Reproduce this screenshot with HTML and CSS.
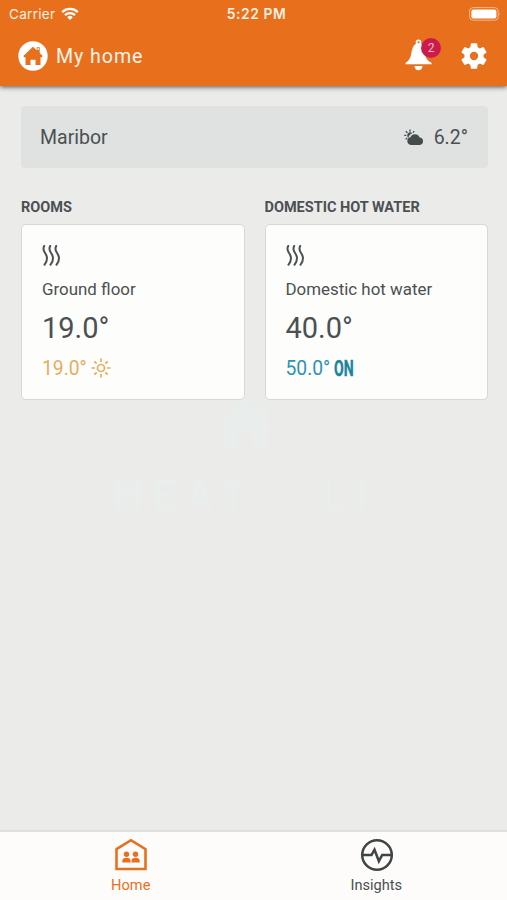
FILE: index.html
```html
<!DOCTYPE html>
<html lang="en">
<head>
<meta charset="utf-8">
<title>My home</title>
<link rel="stylesheet" href="styles.css">
</head>
<body>
<div class="app">
  <header class="header">
    <div class="status">
      <div class="carrier"><span>Carrier</span>
        <svg width="18" height="14" viewBox="0 0 18 14" fill="none" stroke="#fff" stroke-width="2.3"><path d="M1.2 5.1a11.2 11.2 0 0 1 15.6 0M4 8.1a7.2 7.2 0 0 1 10 0"/><path d="M9 13 6.2 10.2a4 4 0 0 1 5.6 0z" fill="#fff" stroke="none"/></svg>
      </div>
      <div class="time">5:22 PM</div>
      <svg class="battery" width="32" height="14" viewBox="0 0 32 14"><rect x=".6" y=".6" width="28.6" height="12.6" rx="3.6" fill="none" stroke="#f6b98c"/><rect x="2.4" y="2.4" width="25" height="9" rx="2" fill="#fff"/><path d="M30.5 5v4q1.3-2 0-4" fill="#f6b98c"/></svg>
    </div>
    <div class="toolbar">
      <svg width="30" height="30" viewBox="0 0 30 30"><circle cx="15" cy="15" r="14.7" fill="#fff"/><path fill="#e8701c" d="M15 5.800 18.700 9.300V6.300h3V12l3 3-1.200 1.600-1-.4V24H17.500v-5.300h-5V24H7.500v-7.800l-1 .4-1.200-1.600z"/><circle cx="20.200" cy="7.900" r=".9" fill="#fff"/></svg>
      <h1 class="title">My home</h1>
      <div class="bell">
        <svg width="28" height="32" viewBox="0 0 28 32"><path fill="#fff" d="M13.500.5c1.800 0 2.800 1.100 2.800 2.600 0 .7-.2 1.200-.2 1.700 2.600 1.900 3.300 5.500 3.800 9.200.6 4.600 2.300 7.900 6.700 9.700v1.600H.6v-1.600c3.300-1.700 5-4.800 5.700-9.200.7-4.200 1.500-7.700 4.600-9.700 0-.5-.2-1-.2-1.700 0-1.500 1-2.600 2.800-2.600z"/><path fill="#fff" d="M9.500 27h8c-.2 2.800-1.700 4.200-4 4.200S9.700 29.800 9.500 27z"/><circle cx="13.500" cy="3.300" r="1.100" fill="#e8701c"/></svg>
        <span class="badge">2</span>
      </div>
      <svg class="gear" width="32" height="32" viewBox="0 0 24 24" fill="#fff"><path d="M19.14 12.94c.04-.3.06-.61.06-.94 0-.32-.02-.64-.07-.94l2.03-1.58a.49.49 0 0 0 .12-.61l-1.92-3.32a.488.488 0 0 0-.59-.22l-2.39.96c-.5-.38-1.030-.7-1.620-.94l-.36-2.540a.484.484 0 0 0-.480-.410h-3.840c-.240 0-.430.170-.470.410l-.360 2.540c-.590.240-1.130.570-1.620.940l-2.390-.960c-.220-.080-.470 0-.590.220L2.740 8.870c-.120.210-.080.470.120.610l2.030 1.580c-.050.300-.090.630-.090.940s.020.640.070.940l-2.030 1.580a.49.49 0 0 0-.12.61l1.920 3.320c.12.22.37.29.59.22l2.390-.96c.5.38 1.030.7 1.620.94l.36 2.540c.05.24.24.41.48.41h3.840c.24 0 .44-.17.47-.41l.36-2.540c.59-.24 1.130-.56 1.620-.94l2.390.96c.22.08.47 0 .59-.22l1.920-3.320c.12-.22.07-.47-.12-.61zM12 15.100a3.100 3.100 0 1 1 0-6.200 3.100 3.100 0 0 1 0 6.200z"/></svg>
    </div>
  </header>

  <main class="content">
    <section class="weather">
      <span>Maribor</span>
      <div class="outdoor">
        <svg width="20" height="17" viewBox="0 0 20 17"><g stroke="#454c4e" stroke-width="1.300"><path d="M6 .5v2.200M1.800 2.200l1.600 1.600M.2 6.300h2.100M1.600 10.400l1.500-1.500M10.200 2.100 8.900 3.600"/></g><path fill="#454c4e" d="M3.200 6.400a3 3 0 0 1 5.200-2.100 6 6 0 0 0-4 4.700 3 3 0 0 1-1.200-2.600z"/><path fill="#454c4e" d="M6.900 16a3.900 3.900 0 0 1-.5-7.700 4.900 4.900 0 0 1 9.100-.1 3.950 3.950 0 0 1 .3 7.800z"/></svg>
        <span>6.2°</span>
      </div>
    </section>

    <div class="groups">
      <section>
        <h2 class="group-title">ROOMS</h2>
        <article class="card">
          <svg class="heat" width="20" height="21" viewBox="0 0 20 21"><path d="M2.200 1C-.8 6.500 5 8 5 13c0 3-.8 5-2.500 6.800M8.200 1c-3 5.500 2.800 7 2.800 12 0 3-.8 5-2.500 6.800M14.200 1c-3 5.500 2.800 7 2.800 12 0 3-.8 5-2.500 6.800"/></svg>
          <p class="name">Ground floor</p>
          <p class="current">19.0°</p>
          <div class="target sunny"><span>19.0°</span>
            <svg width="20" height="20" viewBox="0 0 20 20" fill="none" stroke="#e5ac62" stroke-width="1.700"><circle cx="10" cy="10" r="3.500"/><path d="M10 .5V4M10 16v3.500M.5 10H4M16 10h3.500M3.300 3.300l2.400 2.400M14.300 14.300l2.400 2.400M3.300 16.700l2.400-2.400M14.300 5.700l2.400-2.400"/></svg>
          </div>
        </article>
      </section>
      <section>
        <h2 class="group-title">DOMESTIC HOT WATER</h2>
        <article class="card">
          <svg class="heat" width="20" height="21" viewBox="0 0 20 21"><path d="M2.200 1C-.8 6.500 5 8 5 13c0 3-.8 5-2.500 6.800M8.200 1c-3 5.500 2.800 7 2.800 12 0 3-.8 5-2.500 6.800M14.200 1c-3 5.500 2.800 7 2.800 12 0 3-.8 5-2.500 6.800"/></svg>
          <p class="name">Domestic hot water</p>
          <p class="current">40.0°</p>
          <div class="target water"><span>50.0°</span><span class="on"><b>ON</b></span></div>
        </article>
      </section>
    </div>

    <div class="watermark">
      <svg width="52" height="50" viewBox="0 0 52 50"><path fill="#e9eeed" d="M26 0 38 13V10h9v13l5 5-4 4v18H34V36H19v14H4V32l-4-4z"/></svg>
      <div class="brand"><span>HEAT</span><span>LI</span></div>
    </div>
  </main>

  <nav class="tabs">
    <div class="tab active">
      <svg width="34" height="34" viewBox="0 0 34 34"><path d="M2.500 11.200 17 2.200l14.500 9V31h-29z" fill="none" stroke="#e8701c" stroke-width="2.600"/><g fill="#e8701c"><circle cx="12.500" cy="16.300" r="2.700"/><circle cx="21.500" cy="16.300" r="2.700"/><path d="M8.300 24.500v-1.800c0-2 1.700-3 4.200-3s4.100 1 4.100 3v1.800zM17.500 24.500v-1.800c0-2 1.700-3 4.100-3s4.100 1 4.100 3v1.800z"/></g></svg>
      <span>Home</span>
    </div>
    <div class="tab">
      <svg width="34" height="34" viewBox="0 0 34 34" fill="none" stroke="#3f4445" stroke-width="2.500"><circle cx="18" cy="17" r="14.800"/><path d="M3.500 17h9l3-5.300 4.400 11.500 3.300-6.200h9.300"/></svg>
      <span>Insights</span>
    </div>
  </nav>
</div>
</body>
</html>
```
FILE: styles.css
```css
* { box-sizing: border-box; }
body { margin: 0; font-family: Roboto, "Liberation Sans", sans-serif; color: #4b5052; background: #ebebea; }
h1, h2, p { margin: 0; font-weight: 400; }
svg { display: block; flex: none; }
.app { height: 900px; display: flex; flex-direction: column; overflow: hidden; }

.header { height: 86px; flex: none; background: #e8701c; color: #fff; box-shadow: 0 1px 5px rgba(0, 0, 0, .65); }
.status { height: 26px; padding: 1px 6px 0 9px; display: grid; grid-template-columns: 1fr auto 1fr; align-items: center; font-family: Inter, sans-serif; font-size: 13.5px; color: #fff0e4; }
.carrier { display: flex; align-items: center; gap: 6px; letter-spacing: .3px; }
.time { margin-left: 3px; font-weight: 600; font-size: 13.8px; letter-spacing: .6px; }
.battery { justify-self: end; }
.toolbar { height: 60px; padding: 0 17px 0 18px; display: flex; align-items: center; }
.title { flex: 1; margin-left: 8px; font-size: 19.6px; letter-spacing: .95px; color: #fff3e9; }
.bell { position: relative; top: -1px; margin-right: 25px; }
.badge { position: absolute; left: 16px; top: -1px; width: 20px; height: 20px; border-radius: 50%; background: #cb1b4d; color: #f3bccb; font-size: 12px; line-height: 20px; text-align: center; }

.content { flex: 1; padding: 20px 19px 0 21px; }
.weather { height: 62px; padding: 0 20px 0 19px; border-radius: 4px; background: #dfe2e1; display: flex; align-items: center; justify-content: space-between; font-size: 19.5px; }
.outdoor { display: flex; align-items: center; gap: 10px; }
.groups { margin-top: 29px; display: grid; grid-template-columns: 1fr 1fr; column-gap: 20px; }
.group-title { height: 27px; line-height: 21px; font-size: 14.5px; font-weight: 700; white-space: nowrap; }
.card { height: 176px; padding: 20px 20px 0 20px; background: #fdfdfc; border: 1px solid #d8d8d7; border-radius: 5px; }
.heat { fill: none; stroke: #4b5052; stroke-width: 2; stroke-linecap: round; }
.name { margin-top: 11px; line-height: 24px; font-size: 16.9px; white-space: nowrap; }
.current { margin-top: 9px; line-height: 36px; font-size: 29px; }
.target { margin-top: 10px; height: 24px; display: flex; align-items: center; gap: 4px; font-size: 19.3px; }
.sunny { color: #e5ac62; }
.water { color: #2d93b5; }
.on { width: 20px; height: 24px; line-height: 26px; font-size: 22px; color: #21829f; }
.on b { display: inline-block; transform: scaleX(.64); transform-origin: left; -webkit-text-stroke: .4px #21829f; }

.watermark { width: 264px; margin: -3px 0 0 92px; display: flex; flex-direction: column; align-items: center; }
.brand { width: 100%; margin-top: 23px; display: flex; justify-content: space-between; font-size: 43px; font-weight: 700; line-height: 50px; letter-spacing: 9px; color: #e9edeb; }

.tabs { height: 70px; flex: none; display: flex; padding: 0 8px; background: #fdfcfb; border-top: 2px solid #e0e0df; }
.tab { flex: 1; padding-top: 6px; display: flex; flex-direction: column; align-items: center; font-size: 14.6px; line-height: 20px; }
.tab span { margin-top: 3px; }
.active { color: #e8701c; }
```
